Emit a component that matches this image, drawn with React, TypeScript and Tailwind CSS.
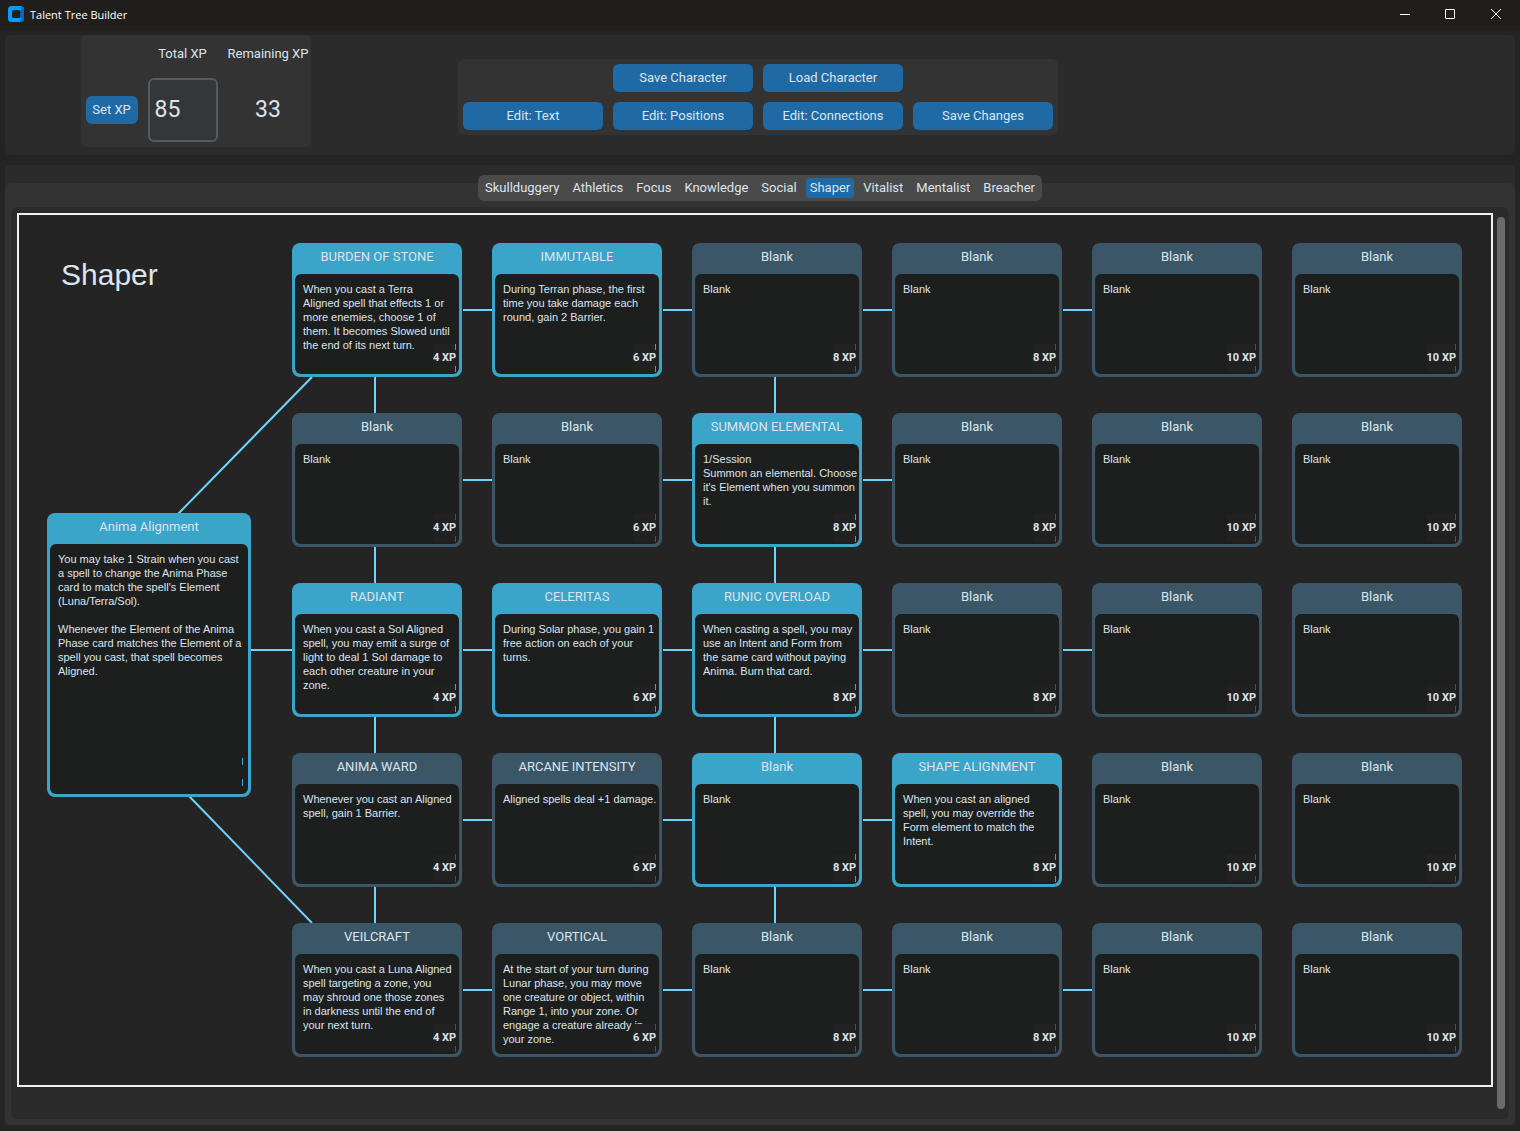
import React from "react";

type Talent = { title: string; body: string; owned?: boolean };

const blank: Talent = { title: "Blank", body: "Blank" };

const rows: Talent[][] = [
  [
    { title: "BURDEN OF STONE", owned: true, body: "When you cast a Terra\nAligned spell that effects 1 or\nmore enemies, choose 1 of\nthem. It becomes Slowed until\nthe end of its next turn." },
    { title: "IMMUTABLE", owned: true, body: "During Terran phase, the first\ntime you take damage each\nround, gain 2 Barrier." },
    blank, blank, blank, blank,
  ],
  [
    blank, blank,
    { title: "SUMMON ELEMENTAL", owned: true, body: "1/Session\nSummon an elemental. Choose\nit's Element when you summon\nit." },
    blank, blank, blank,
  ],
  [
    { title: "RADIANT", owned: true, body: "When you cast a Sol Aligned\nspell, you may emit a surge of\nlight to deal 1 Sol damage to\neach other creature in your\nzone." },
    { title: "CELERITAS", owned: true, body: "During Solar phase, you gain 1\nfree action on each of your\nturns." },
    { title: "RUNIC OVERLOAD", owned: true, body: "When casting a spell, you may\nuse an Intent and Form from\nthe same card without paying\nAnima. Burn that card." },
    blank, blank, blank,
  ],
  [
    { title: "ANIMA WARD", body: "Whenever you cast an Aligned\nspell, gain 1 Barrier." },
    { title: "ARCANE INTENSITY", body: "Aligned spells deal +1 damage." },
    { ...blank, owned: true },
    { title: "SHAPE ALIGNMENT", owned: true, body: "When you cast an aligned\nspell, you may override the\nForm element to match the\nIntent." },
    blank, blank,
  ],
  [
    { title: "VEILCRAFT", body: "When you cast a Luna Aligned\nspell targeting a zone, you\nmay shroud one those zones\nin darkness until the end of\nyour next turn." },
    { title: "VORTICAL", body: "At the start of your turn during\nLunar phase, you may move\none creature or object, within\nRange 1, into your zone. Or\nengage a creature already in\nyour zone." },
    blank, blank, blank, blank,
  ],
];

const costs = ["4 XP", "6 XP", "8 XP", "8 XP", "10 XP", "10 XP"];

const root: Talent = {
  title: "Anima Alignment",
  owned: true,
  body: "You may take 1 Strain when you cast\na spell to change the Anima Phase\ncard to match the spell's Element\n(Luna/Terra/Sol).\n\nWhenever the Element of the Anima\nPhase card matches the Element of a\nspell you cast, that spell becomes\nAligned.",
};

const COL = 200;
const ROW = 170;
const LEFT = 273;
const TOP = 28;

/* Number of horizontal links leaving the first card of each row. */
const rowLinks = [4, 3, 4, 3, 4];
const linkedColumns = [0, 2];

function Card({ talent, cost }: { talent: Talent; cost?: string }) {
  const frame = talent.owned ? "bg-[#3aa5c8]" : "bg-[#3b5767]";
  const edge = talent.owned ? "border-[#3aa5c8]" : "border-[#3b5767]";
  return (
    <article className={`relative flex h-full flex-col rounded-lg px-[3px] pb-[3px] ${frame}`}>
      <h2 className="h-[31px] pt-1 text-center text-[13px] leading-5 text-[#dce4ee]">{talent.title}</h2>
      <p className="grow whitespace-pre rounded-md bg-[#1d1f1e] px-2 pt-2 font-['Liberation_Sans',Arial,sans-serif] text-[11px] leading-[14px] text-[#dce4ee]">
        {talent.body}
      </p>
      {cost ? (
        <div className={`absolute bottom-[5px] right-[6px] flex h-7 items-center border-r bg-[#212121] ${edge}`}>
          <span className="-mr-px bg-[#212121] text-[11px] font-bold leading-4 text-[#dce4ee]">{cost}</span>
        </div>
      ) : (
        <div className={`absolute bottom-[11px] right-[8px] flex h-7 items-center border-r ${edge}`}>
          <span className="-mr-px h-[14px] w-px bg-[#212121]" />
        </div>
      )}
    </article>
  );
}

function Connections() {
  return (
    <svg className="absolute inset-0 h-full w-full" stroke="#6fd3ff" strokeWidth="2" fill="none" aria-hidden="true">
      {rowLinks.map((count, r) =>
        Array.from({ length: count }, (_, c) => (
          <path key={`h${r}-${c}`} d={`M${LEFT + c * COL + 171} ${TOP + r * ROW + 67}h29`} />
        )),
      )}
      {linkedColumns.map((c) =>
        [0, 1, 2, 3].map((r) => (
          <path key={`v${r}-${c}`} d={`M${LEFT + c * COL + 83} ${TOP + r * ROW + 134}v36`} />
        )),
      )}
      <path d="M232 435h41" />
      <path d="M293 162L159 299" />
      <path d="M170 581L293 708" />
    </svg>
  );
}

const btn = "h-7 rounded-md bg-[#1f6aa5] text-[13px] leading-5 text-[#dce4ee] hover:bg-[#144870]";

const tabs = ["Skullduggery", "Athletics", "Focus", "Knowledge", "Social", "Shaper", "Vitalist", "Mentalist", "Breacher"];

function TitleBar() {
  return (
    <header className="flex h-[30px] items-center bg-[#201f1d] pb-0.5 pl-2">
      <svg width="16" height="16" viewBox="0 0 16 16" aria-hidden="true">
        <rect width="16" height="16" rx="3.5" fill="#0a9bff" />
        <path d="M12 1L15 1.200A3.500 3.500 0 0 1 16 3.500v9a3.500 3.500 0 0 1-3.500 3.500H12l1-3V3z" fill="#0668b8" />
        <rect x="4" y="4" width="8.500" height="8" rx="1.500" fill="#201f1d" />
      </svg>
      <h1 className="ml-1.5 grow pt-0.5 font-['Open_Sans','Noto_Sans',sans-serif] text-[11px] leading-4 text-white">Talent Tree Builder</h1>
      <button aria-label="Minimize" className="flex h-full w-[46px] items-center justify-center">
        <svg width="10" height="10" stroke="#fff" fill="none"><path d="M0 5.500h10" /></svg>
      </button>
      <button aria-label="Maximize" className="flex h-full w-11 items-center justify-center">
        <svg width="10" height="10" stroke="#fff" fill="none"><rect x=".5" y=".5" width="9" height="9" rx=".5" /></svg>
      </button>
      <button aria-label="Close" className="flex h-full w-12 items-center justify-center">
        <svg width="10" height="10" stroke="#fff" fill="none"><path d="M0 0l10 10M10 0L0 10" /></svg>
      </button>
    </header>
  );
}

export default function App() {
  return (
    <div className="flex min-h-screen flex-col bg-[#242424] font-[Roboto,sans-serif] text-[#dce4ee]">
      <TitleBar />

      <section className="mx-[5px] mt-[5px] grid h-[120px] grid-cols-[382fr_742fr_386fr] rounded-md bg-[#2b2b2b]">
        <div className="grid grid-cols-[52px_70px_auto] items-center gap-[10px] self-start justify-self-center rounded-md bg-[#333333] p-[5px] pr-[3px] text-[13px]">
          <label htmlFor="total" className="col-start-2 h-7 text-center leading-7">Total XP</label>
          <span className="h-7 text-center leading-7">Remaining XP</span>
          <button className={btn}>Set XP</button>
          <input
            id="total"
            defaultValue="85"
            className="h-16 w-full rounded-md border-2 border-[#565b5e] bg-[#343638] px-[5px] pb-0.5 text-[23px] outline-none"
          />
          <output className="text-center text-[23px]">33</output>
        </div>

        <div className="mt-6 grid grid-cols-4 gap-[10px] self-start justify-self-center rounded-md bg-[#333333] p-[5px]">
          <button className={`${btn} col-start-2 w-[140px]`}>Save Character</button>
          <button className={`${btn} w-[140px]`}>Load Character</button>
          <button className={`${btn} col-start-1 w-[140px]`}>Edit: Text</button>
          <button className={`${btn} w-[140px]`}>Edit: Positions</button>
          <button className={`${btn} w-[140px]`}>Edit: Connections</button>
          <button className={`${btn} w-[140px]`}>Save Changes</button>
        </div>
      </section>

      <main className="mx-[5px] mb-[6px] mt-[10px] flex grow flex-col bg-[#2b2b2b] pt-[18px]">
        <div className="flex grow flex-col rounded-md bg-[#333333] px-[6px] pb-[6px]">
          <nav role="tablist" className="z-10 -mt-2 mb-[6px] flex h-[26px] items-center gap-[5px] self-center rounded-md bg-[#4a4a4a] px-[3px]">
            {tabs.map((t) => (
              <button
                key={t}
                role="tab"
                aria-selected={t === "Shaper"}
                className={`h-5 rounded-sm px-1 text-[13px] leading-5 ${t === "Shaper" ? "bg-[#1f6aa5]" : ""}`}
              >
                {t}
              </button>
            ))}
          </nav>

          <div className="flex grow rounded-md bg-[#2b2b2b] pl-[6px] pr-1 pt-[6px]">
            <div className="relative h-[874px] grow border-2 border-[#f2f2f2] bg-[#242424]">
              <Connections />
              <h2 className="absolute left-[42px] top-[42px] font-['Liberation_Sans',Arial,sans-serif] text-3xl leading-9">Shaper</h2>
              <div className="absolute left-[28px] top-[298px] h-[284px] w-[204px]">
                <Card talent={root} />
              </div>
              <div className="absolute left-[273px] top-[28px] grid grid-cols-[repeat(6,170px)] grid-rows-[repeat(5,134px)] gap-x-[30px] gap-y-9">
                {rows.flatMap((row, r) =>
                  row.map((talent, c) => <Card key={`${r}-${c}`} talent={talent} cost={costs[c]} />),
                )}
              </div>
            </div>
            <div className="mb-[10px] ml-1 mt-1 w-2 rounded-full bg-[#6a6a6a]" />
          </div>
        </div>
      </main>
    </div>
  );
}
